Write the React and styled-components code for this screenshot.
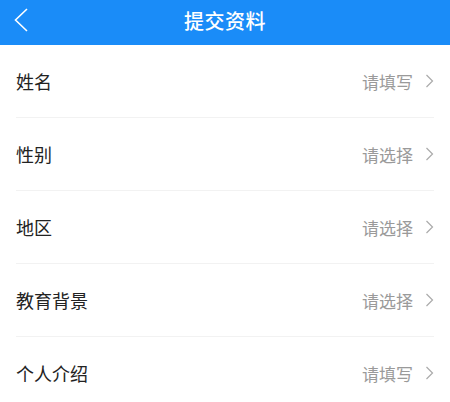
import React from "react";
import styled, { createGlobalStyle } from "styled-components";

const Global = createGlobalStyle`
  html, body { margin: 0; padding: 0; background: #fff; }
  body { font-family: "Noto Sans CJK SC", "Noto Sans", sans-serif; }
`;

const Page = styled.div`
  width: 450px;
  background: #fff;
`;

const Header = styled.header`
  height: 45px;
  background: #1a8cf8;
  display: flex;
  align-items: center;
  justify-content: center;
  position: relative;
`;

const Back = styled.button`
  position: absolute;
  left: 12px;
  top: 7px;
  width: 18px;
  height: 26px;
  padding: 0;
  border: 0;
  background: none;
  display: flex;
  align-items: center;
  justify-content: center;
`;

const Title = styled.h1`
  margin: 0;
  color: #fff;
  font-size: 20px;
  font-weight: 500;
  line-height: 1;
  letter-spacing: 0.5px;
  margin-top: -3px;
`;

const List = styled.div`
  padding: 0 16px;
`;

const Row = styled.div`
  height: 72px;
  display: flex;
  align-items: center;
  justify-content: space-between;
  border-bottom: ${(p) => (p.$last ? "none" : "1px solid #f2f2f2")};
`;

const Label = styled.span`
  font-size: 18px;
  color: #222;
`;

const Right = styled.div`
  display: flex;
  align-items: center;
  gap: 12px;
`;

const Hint = styled.span`
  font-size: 17px;
  color: #9a9a9a;
`;

const Chevron = () => (
  <svg width="9" height="14" viewBox="0 0 9 14" fill="none">
    <path d="M1.5 1L7.5 7L1.5 13" stroke="#aaa" strokeWidth="1.2" />
  </svg>
);

const rows = [
  ["姓名", "请填写"],
  ["性别", "请选择"],
  ["地区", "请选择"],
  ["教育背景", "请选择"],
  ["个人介绍", "请填写"],
];

export default function App() {
  return (
    <Page>
      <Global />
      <Header>
        <Back aria-label="back">
          <svg width="18" height="26" viewBox="0 0 18 26" fill="none">
            <path d="M15 2L3.5 13L15 24" stroke="#fff" strokeWidth="1.6" />
          </svg>
        </Back>
        <Title>提交资料</Title>
      </Header>
      <List>
        {rows.map(([l, h], i) => (
          <Row key={l} $last={i === rows.length - 1}>
            <Label>{l}</Label>
            <Right>
              <Hint>{h}</Hint>
              <Chevron />
            </Right>
          </Row>
        ))}
      </List>
    </Page>
  );
}
